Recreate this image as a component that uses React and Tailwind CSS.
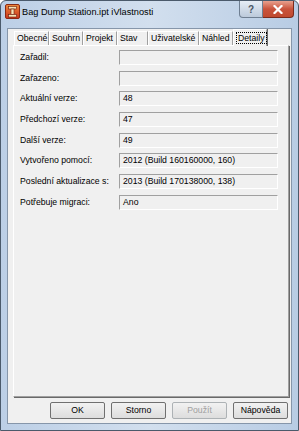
import React from 'react'

const fields = [
  { label: 'Zařadil:', value: '' },
  { label: 'Zařazeno:', value: '' },
  { label: 'Aktuální verze:', value: '48' },
  { label: 'Předchozí verze:', value: '47' },
  { label: 'Další verze:', value: '49' },
  { label: 'Vytvořeno pomocí:', value: '2012 (Build 160160000, 160)' },
  { label: 'Poslední aktualizace s:', value: '2013 (Build 170138000, 138)' },
  { label: 'Potřebuje migraci:', value: 'Ano' },
]

const tabs = [
  { label: 'Obecné', w: 'w-[35px]' },
  { label: 'Souhrn', w: 'w-[34px]' },
  { label: 'Projekt', w: 'w-[34px]' },
  { label: 'Stav', w: 'w-[31px]' },
  { label: 'Uživatelské', w: 'w-[51px]' },
  { label: 'Náhled', w: 'w-[34px]' },
]

function AppIcon() {
  return (
    <svg width="15" height="15" viewBox="0 0 15 15">
      <defs>
        <linearGradient id="ic" x1="0" y1="0" x2="0" y2="1">
          <stop offset="0" stopColor="#f08a3c" />
          <stop offset="1" stopColor="#c8341c" />
        </linearGradient>
      </defs>
      <rect x="0.5" y="0.5" width="14" height="14" rx="1.5" fill="url(#ic)" stroke="#8a2a14" />
      <rect x="3.5" y="2.5" width="8" height="2.5" fill="#f7e3b5" stroke="#6b1c0c" strokeWidth="0.6" />
      <rect x="6" y="5" width="3" height="5.5" fill="#f7e3b5" stroke="#6b1c0c" strokeWidth="0.6" />
      <rect x="3.5" y="10.5" width="8" height="2.5" fill="#f7e3b5" stroke="#6b1c0c" strokeWidth="0.6" />
    </svg>
  )
}

function Button({ children, disabled }) {
  return (
    <button
      className={`w-[55px] h-[17px] rounded-[2px] border bg-gradient-to-b from-[#f2f2f2] to-[#dddddd] ${disabled ? 'text-[#a0a0a0] border-[#adb2b5]' : 'text-black border-[#707070]'}`}
    >
      {children}
    </button>
  )
}

export default function App() {
  return (
    <div className="w-[299px] h-[431px] flex flex-col bg-gradient-to-r from-[#bccfe6] via-[#d2dfee] to-[#b8cce4] border border-[#4b5a6b] rounded-t-[6px] font-['Liberation_Sans',sans-serif] text-[8.7px] text-black">
      {/* Title bar */}
      <div className="h-[27px] flex items-start">
        <div className="pl-[4px] pt-[3px]">
          <AppIcon />
        </div>
        <div className="pl-[2px] pt-[5px] text-[9.2px] text-black">Bag Dump Station.ipt iVlastnosti</div>
        <div className="ml-auto mr-[4px] flex">
          <div className="w-[24px] h-[17px] flex items-center justify-center rounded-bl-[4px] border border-[#6f7f92] border-t-0 bg-gradient-to-b from-[#e6edf5] to-[#bccadb] text-[10px] font-bold text-[#4a5563]">?</div>
          <div className="w-[31px] h-[17px] flex items-center justify-center rounded-br-[4px] border border-[#7a2a1c] border-t-0 border-l-0 bg-gradient-to-b from-[#e8a08e] via-[#c9533c] to-[#c04a30]">
            <svg width="10" height="9" viewBox="0 0 10 9">
              <path d="M1.5 1 L8.5 8 M8.5 1 L1.5 8" stroke="#ffffff" strokeWidth="2.2" strokeLinecap="square" />
            </svg>
          </div>
        </div>
      </div>

      {/* Client area */}
      <div className="mx-[6px] h-[396px] border border-[#8696aa] bg-[#f0f0f0] flex flex-col">
        {/* Tabs */}
        <div className="h-[16px] pl-[6px] pt-[2px] flex items-end">
          {tabs.map((t) => (
            <div
              key={t.label}
              className={`${t.w} h-[14px] flex items-center pl-[2px] border-t border-l border-white border-r border-r-[#a0a0a0] shadow-[1px_0_0_#696969] whitespace-nowrap`}
            >
              {t.label}
            </div>
          ))}
          <div className="w-[34px] h-[17px] -mb-[1px] flex items-start pt-[2px] pl-[2px] border-t border-l border-white border-r border-r-[#a0a0a0] shadow-[1px_0_0_#696969] bg-[#f0f0f0] relative z-10">
            <span className="px-[1px] leading-[10px] border border-dotted border-black">Detaily</span>
          </div>
        </div>

        {/* Tab panel */}
        <div className="ml-[5px] w-[276px] h-[352px] border-t border-l border-white border-r border-b border-r-[#a0a0a0] border-b-[#a0a0a0] shadow-[1px_1px_0_#696969] pt-[4px]">
          <div className="flex flex-col gap-y-[5.7px]">
            {fields.map((f) => (
              <div key={f.label} className="h-[15px] flex items-center">
                <div className="w-[105px] pl-[6px]">{f.label}</div>
                <div className="w-[159px] h-[15px] flex items-center pl-[3px] border-t border-l border-[#a0a0a0] border-r border-b border-r-white border-b-white bg-[#f0f0f0]">
                  {f.value}
                </div>
              </div>
            ))}
          </div>
        </div>

        {/* Buttons */}
        <div className="mt-[5px] pl-[42px] flex gap-[6px]">
          <Button>OK</Button>
          <Button>Storno</Button>
          <Button disabled>Použít</Button>
          <Button>Nápověda</Button>
        </div>
      </div>
    </div>
  )
}
